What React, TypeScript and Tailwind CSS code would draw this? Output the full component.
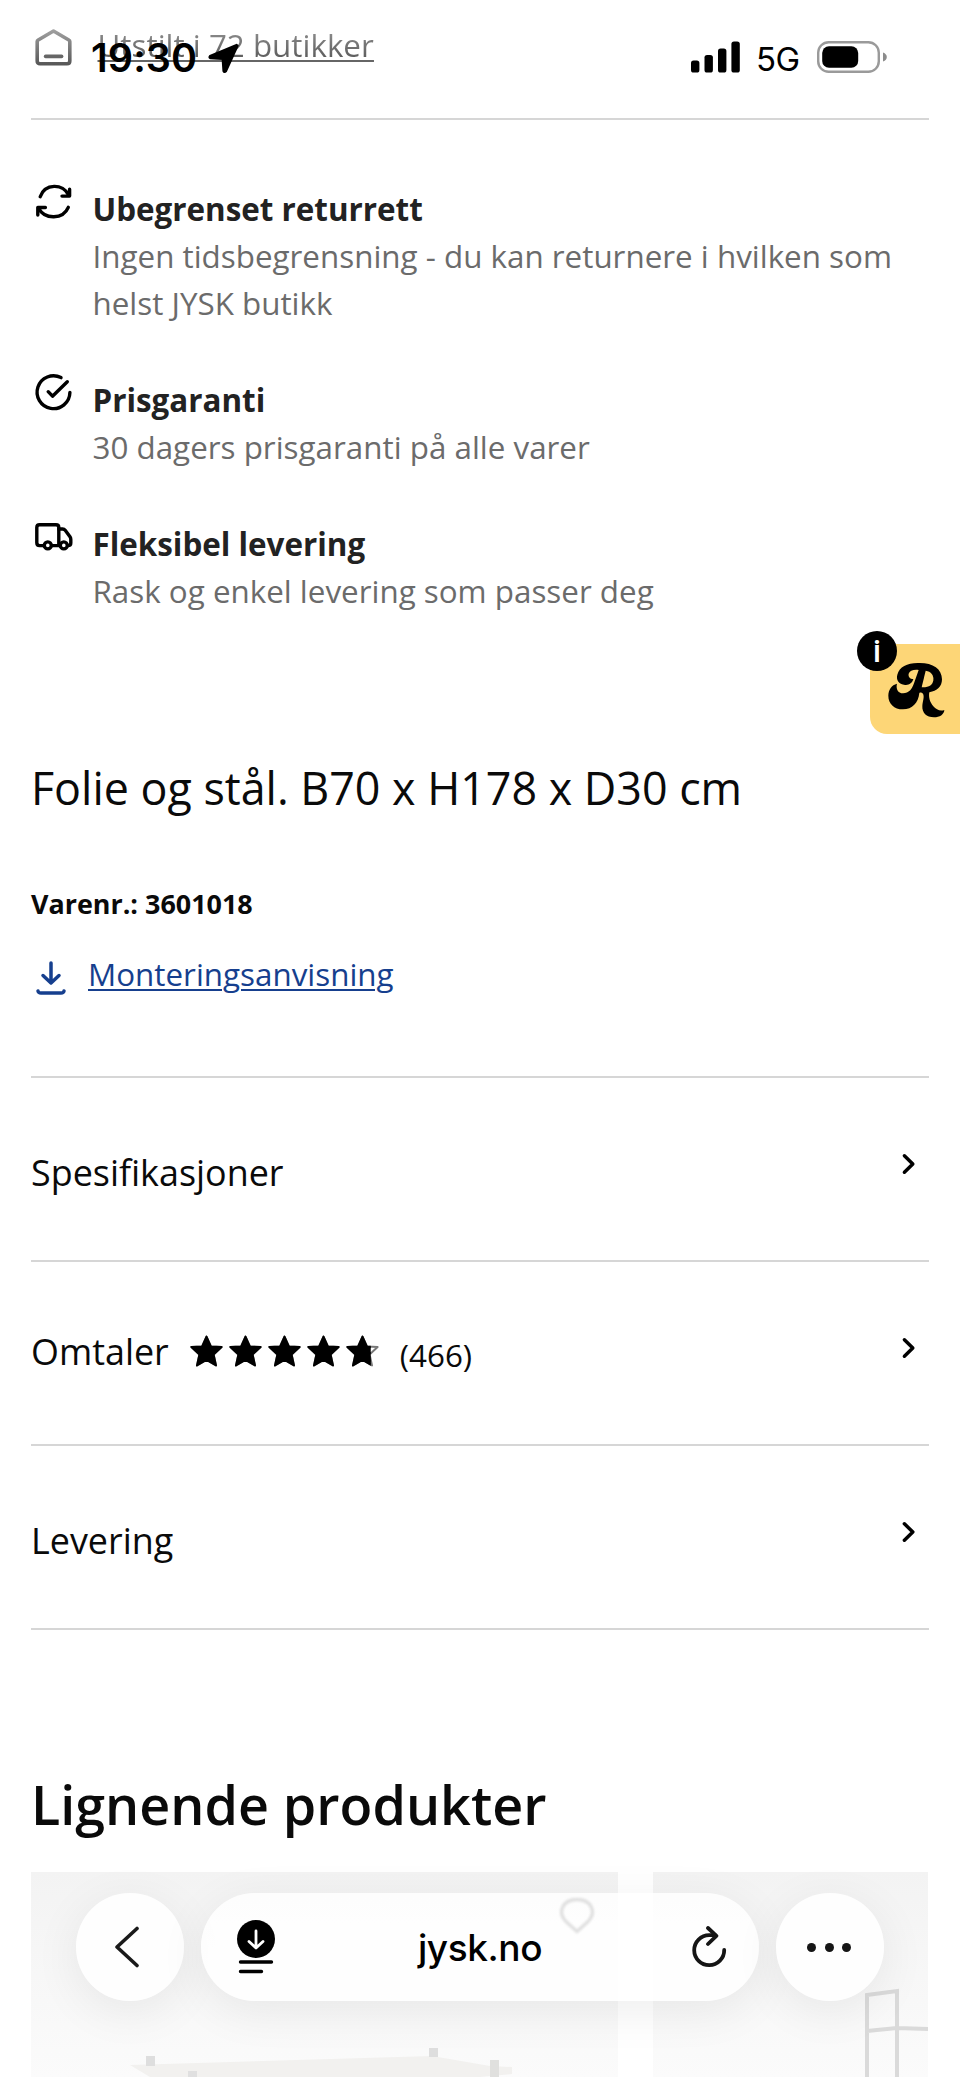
import { useState } from 'react';
import type { ReactNode } from 'react';

interface Feature {
  id: string;
  title: string;
  text: string;
  icon: ReactNode;
}

const STAR = 'M16.5 1.6 L21 11.6 L31.6 12 L23.6 19.4 L26 30.4 L16.5 25 L7 30.4 L9.4 19.4 L1.4 12 L12 11.6 Z';

function HouseIcon() {
  return (
    <svg width="47" height="47" viewBox="0 0 47 47" fill="none" strokeWidth="3.6" strokeLinecap="round" strokeLinejoin="round">
      <defs>
        <linearGradient id="houseFade" x1="0" y1="6" x2="0" y2="42" gradientUnits="userSpaceOnUse">
          <stop offset="0" stopColor="#a0a0a0" />
          <stop offset="1" stopColor="#555555" />
        </linearGradient>
      </defs>
      <path d="M7.2 17.6 Q7.2 16.6 8.2 16 L23.5 7 L38.8 16 Q39.8 16.6 39.8 17.6 V37 Q39.8 39.8 37 39.8 H10 Q7.2 39.8 7.2 37 Z" stroke="url(#houseFade)" />
      <path d="M15.6 32.4 H31.6" stroke="#666666" />
    </svg>
  );
}

const features: Feature[] = [
  {
    id: 'return',
    title: 'Ubegrenset returrett',
    text: 'Ingen tidsbegrensning - du kan returnere i hvilken som helst JYSK butikk',
    icon: (
      <>
        <path d="M10.2 18.7 C15 5.2 33 5.2 38.8 17.3" />
        <path d="M39.6 11.3 V18.1 H32" />
        <path d="M38.3 29.3 C33 41.6 15 41.8 8.6 30.3" />
        <path d="M7.8 37 V29.5 H15.4" />
      </>
    ),
  },
  {
    id: 'price',
    title: 'Prisgaranti',
    text: '30 dagers prisgaranti på alle varer',
    icon: (
      <>
        <path d="M31 8.6 A16.4 16.4 0 1 0 39.9 23.5" />
        <path d="M18.2 22.7 L22.5 27.2 L37.3 12.7" />
      </>
    ),
  },
  {
    id: 'delivery',
    title: 'Fleksibel levering',
    text: 'Rask og enkel levering som passer deg',
    icon: (
      <>
        <path d="M13.6 32.6 H9.6 Q6.8 32.6 6.8 29.8 V14.4 Q6.8 11.7 9.6 11.7 H26 Q28.8 11.7 28.8 14.4 V32.6 H22" />
        <path d="M28.8 16 H32.6 Q34.2 16 35.2 17.3 L40 23.8 Q40.8 25 40.8 26.4 V30 Q40.8 32.6 38 32.6" />
        <circle cx="17.8" cy="32.4" r="3.5" />
        <circle cx="33.8" cy="32.4" r="3.5" />
      </>
    ),
  },
];

function Chevron() {
  return (
    <svg width="20" height="26" viewBox="0 0 20 26" fill="none" stroke="#000" strokeWidth="3.5" strokeLinecap="round" strokeLinejoin="round">
      <path d="M5.4 4.8 L13.8 13 L5.4 21.2" />
    </svg>
  );
}

function Stars({ rating }: { rating: number }) {
  return (
    <div className="flex gap-1.5">
      {[0, 1, 2, 3, 4].map((i) => (
        <svg key={i} width="33" height="32" viewBox="0 0 33 32" strokeLinejoin="round" strokeWidth="2">
          <defs>
            <clipPath id={`star-${i}`}>
              <rect x="0" y="0" width={Math.min(1, rating - i) * 33} height="32" />
            </clipPath>
          </defs>
          <path d={STAR} fill="none" stroke="#777" />
          <path d={STAR} fill="#000" stroke="#000" clipPath={`url(#star-${i})`} />
        </svg>
      ))}
    </div>
  );
}

function StatusBar() {
  return (
    <div className="absolute inset-x-0 top-0 flex h-[114px] items-center justify-between pl-[91px] pr-[72px] font-['Inter',sans-serif] text-black">
      <div className="flex items-center gap-[11px]">
        <span className="pt-0.5 text-[39.5px] font-semibold leading-[48px] tracking-[0.1px]">19:30</span>
        <svg className="mt-0.5" width="31" height="31" viewBox="0 0 31 31" fill="#000" stroke="#000" strokeWidth="2" strokeLinejoin="round">
          <path d="M28.5 1.8 L2 13 Q0.6 14.6 2.4 15.2 L14.6 16 L15.4 28 Q16.4 30 18 28.4 L29.6 2.8 Z" />
        </svg>
      </div>
      <div className="flex items-center">
        <svg width="49" height="32" viewBox="0 0 49 32">
          <rect x="0" y="19.5" width="8.4" height="12" rx="2.6" />
          <rect x="13.5" y="14" width="8.4" height="17.5" rx="2.6" />
          <rect x="27" y="7.5" width="8.4" height="24" rx="2.6" />
          <rect x="40.4" y="0.5" width="8.4" height="31" rx="2.6" />
        </svg>
        <span className="ml-[16px] w-[61px] pt-[3px] text-[33px] leading-10 tracking-[-0.5px]">5G</span>
        <svg width="71" height="32" viewBox="0 0 71 32">
          <rect x="1.2" y="1.2" width="60.6" height="29.6" rx="10.5" fill="none" stroke="#9a9a9a" strokeWidth="2.4" />
          <rect x="5.2" y="5.2" width="36" height="21.6" rx="6.8" />
          <path d="M66 11.5 Q69.8 13 69.8 16 Q69.8 19 66 20.5 Z" fill="#8c8c8c" />
        </svg>
      </div>
    </div>
  );
}

function RewardTab() {
  return (
    <div className="absolute right-0 top-[644px] h-[90px] w-[90px] rounded-bl-[17px] rounded-tl-[17px] bg-[#fdd677]">
      <svg className="absolute left-[17px] top-[16px]" width="60" height="60" viewBox="320 180 180 180">
        <path
          d="M399 237 C396 250 384 257 371 254 C354 251 347 238 351 224 C357 201 380 189 412 189 C455 187 485 205 485 238 C485 260 470 273 447 277 C444 292 449 307 459 319 C468 330 480 334 492 330 C491 344 478 352 461 352 C438 352 425 338 426 318 C427 303 433 291 428 281 C424 277 420 277 417 279 C414 308 396 328 368 328 C341 328 324 311 324 287 C324 269 334 255 350 251 C346 266 353 280 368 280 C386 280 395 267 401 250 L415 210 C400 208 388 212 385 221 C383 230 389 237 399 237 Z"
        />
        <path d="M436 212 C452 214 461 226 459 241 C457 255 446 263 424 262 Z" fill="#fdd677" />
      </svg>
      <div className="absolute -left-[13px] -top-[13px] flex h-10 w-10 items-center justify-center rounded-full bg-black">
        <span className="font-['Roboto',sans-serif] text-[31px] font-medium leading-none text-white">i</span>
      </div>
    </div>
  );
}

function BrowserBar() {
  return (
    <div className="absolute inset-x-0 top-[1893px] flex gap-[17px] px-[76px]">
      <button className="flex h-[108px] w-[108px] shrink-0 items-center justify-center rounded-full bg-white/90 shadow-[0_10px_48px_rgba(0,0,0,0.07)]">
        <svg width="24" height="42" viewBox="0 0 24 42" fill="none" stroke="#1a1a1a" strokeWidth="3.6" strokeLinecap="round" strokeLinejoin="round" className="-ml-1.5">
          <path d="M22 2.5 L2 21 L22 39.5" />
        </svg>
      </button>
      <div className="flex h-[108px] flex-1 items-center justify-between rounded-full bg-white/85 pl-9 pr-8 shadow-[0_10px_48px_rgba(0,0,0,0.07)]">
        <svg width="38" height="54" viewBox="0 0 38 54" fill="none" strokeLinecap="round" strokeLinejoin="round">
          <circle cx="19" cy="19" r="19" fill="#000" />
          <path d="M19 11 V27 M12 21.5 L19 28 L26 21.5" stroke="#fff" strokeWidth="2.8" />
          <path d="M3.5 42 H34.5 M3.5 51.5 H24.5" stroke="#000" strokeWidth="3.4" />
        </svg>
        <span className="pr-1.5 pt-0.5 font-['Inter',sans-serif] text-[37px] font-medium leading-[48px] tracking-[-0.4px] text-black">jysk.no</span>
        <svg width="36" height="42" viewBox="0 0 36 42" fill="none" stroke="#151515" strokeWidth="3.8" strokeLinecap="round" strokeLinejoin="round">
          <path d="M33.2 24 A15 15 0 1 1 18.2 9.2 H24" />
          <path d="M17 2 L25.4 9.8 L17 18" />
        </svg>
      </div>
      <button className="flex h-[108px] w-[108px] shrink-0 items-center justify-center gap-[8.5px] rounded-full bg-white/90 pr-0.5 shadow-[0_10px_48px_rgba(0,0,0,0.07)]">
        <span className="h-[9px] w-[9px] rounded-full bg-[#151515]" />
        <span className="h-[9px] w-[9px] rounded-full bg-[#151515]" />
        <span className="h-[9px] w-[9px] rounded-full bg-[#151515]" />
      </button>
    </div>
  );
}

export default function App() {
  const [rating] = useState(4.75);

  return (
    <div className="relative h-[2077px] w-[960px] overflow-hidden bg-white font-['Open_Sans',sans-serif] text-[#0a0a0a]">
      <main className="px-[31px] pt-5">
        <div className="flex h-[100px] items-start border-b-2 border-[#d6d6d6]">
          <div className="-ml-[1.5px] mt-1 w-[47px]">
            <HouseIcon />
          </div>
          <a className="ml-[21px] mt-[0.5px] bg-gradient-to-b from-[#a0a0a0] to-[#4c4c4c] bg-clip-text text-[31.37px] leading-[47px] text-transparent underline decoration-[#666] decoration-2 underline-offset-[3px]">
            Utstilt i 72 butikker
          </a>
        </div>

        <ul className="flex flex-col gap-[49.6px] pt-[65.4px]">
          {features.map((f) => (
            <li key={f.id} className="flex items-start">
              <svg className="-ml-[1.5px] -mt-[7px] shrink-0" width="47" height="47" viewBox="0 0 47 47" fill="none" stroke="#000" strokeWidth="3.4" strokeLinecap="round" strokeLinejoin="round">
                {f.icon}
              </svg>
              <div className="ml-4 text-[31.37px] leading-[47px]">
                <h3 className="font-bold text-[#222]">{f.title}</h3>
                <p className="text-[#6b6b6b]">{f.text}</p>
              </div>
            </li>
          ))}
        </ul>

        <h2 className="mt-[144.6px] text-[44.8px] leading-[60px]">Folie og stål. B70 x H178 x D30 cm</h2>
        <p className="mt-[68px] text-[26.9px] font-bold leading-9">Varenr.: 3601018</p>
        <div className="mt-[28px] flex items-start">
          <svg className="mt-[10px] ml-1" width="32" height="36" viewBox="0 0 32 36" fill="none" stroke="#163f8e" strokeWidth="3.5" strokeLinecap="round" strokeLinejoin="round">
            <path d="M16 3 V22.5 M8 15.5 L16 23 L24 15.5" />
            <path d="M3 31 Q3.4 33 6 33 H26 Q28.6 33 29 31" />
          </svg>
          <a className="ml-[21px] text-[31.37px] leading-[47px] text-[#163f8e] underline decoration-2 underline-offset-[3px]">Monteringsanvisning</a>
        </div>

        <div className="mt-[79px] border-t-2 border-[#d6d6d6] text-[35.9px]">
          <div className="flex h-[184px] items-center justify-between border-b-2 border-[#d6d6d6] pr-2.5">
            <span className="pt-[7px]">Spesifikasjoner</span>
            <div className="pb-2.5">
              <Chevron />
            </div>
          </div>
          <div className="flex h-[184px] items-center justify-between border-b-2 border-[#d6d6d6] pr-2.5">
            <div className="flex items-center">
              <span className="pb-[3px]">Omtaler</span>
              <div className="ml-[21px] pb-1">
                <Stars rating={rating} />
              </div>
              <span className="ml-[21px] pt-[2px] text-[31.37px]">(466)</span>
            </div>
            <div className="pb-2.5">
              <Chevron />
            </div>
          </div>
          <div className="flex h-[184px] items-center justify-between border-b-2 border-[#d6d6d6] pr-2.5">
            <span className="pt-[7px]">Levering</span>
            <div className="pb-2.5">
              <Chevron />
            </div>
          </div>
        </div>

        <h2 className="mt-[137px] text-[53.8px] font-semibold leading-[74px]">Lignende produkter</h2>
        <div className="mt-[31px] flex gap-[35px]">
          <div className="h-[205px] w-[587px] bg-gradient-to-b from-[#f3f3f3] to-[#fbfbfb]">
            <svg width="587" height="205" viewBox="31 1872 587 205">
              <path d="M130 2065 L432 2056 L490 2066 L512 2067 V2074 L480 2077 H150 Z" fill="#f2f1ef" />
              <rect x="146" y="2056" width="9" height="10" fill="#dedede" />
              <rect x="188" y="2071" width="9" height="6" fill="#e0e0e0" />
              <rect x="429" y="2048" width="9" height="9" fill="#dedede" />
              <rect x="490" y="2060" width="9" height="17" fill="#e0e0de" />
            </svg>
          </div>
          <div className="h-[205px] w-[275px] bg-gradient-to-b from-[#f3f3f3] to-[#fbfbfb]">
            <svg width="275" height="205" viewBox="653 1872 275 205" fill="none" strokeWidth="4" stroke="#dadada">
              <path d="M867 2077 V1995 L897 1991 V2077 M867 2031 L897 2028 L928 2029" />
            </svg>
          </div>
        </div>
      </main>

      <RewardTab />
      <BrowserBar />
      {/* heart of the first product card, seen through the address bar */}
      <svg className="absolute left-[558px] top-[1895px] blur-[1px]" width="38" height="40" viewBox="0 0 38 40" fill="none" stroke="#e0e0e0" strokeWidth="3.4">
        <path d="M19 36.5 L8.5 27 C-1.5 17 5 4.5 19 4.5 C33 4.5 39.5 17 29.5 27 Z" />
      </svg>
      <StatusBar />
    </div>
  );
}
